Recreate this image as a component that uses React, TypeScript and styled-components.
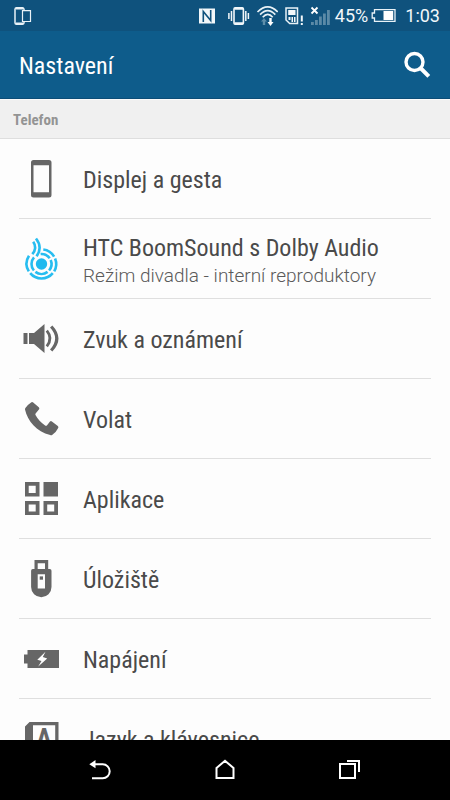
import React from "react";
import styled, { createGlobalStyle } from "styled-components";

const GlobalStyle = createGlobalStyle`
  *, *::before, *::after { box-sizing: border-box; }
  body {
    margin: 0;
    background: #fdfdfd;
    font-family: "Roboto Condensed", Roboto, sans-serif;
    color: #4a4a4a;
  }
  svg { display: block; flex: none; }
`;

const Screen = styled.div`
  display: flex;
  flex-direction: column;
  height: 100vh;
`;

const StatusBar = styled.div`
  display: flex;
  align-items: center;
  justify-content: space-between;
  flex: none;
  height: 31px;
  padding: 0 10px 0 13px;
  background: #0f527d;
  color: #f2f7fa;
  font-family: Roboto, sans-serif;
  font-size: 18px;
  line-height: 24px;
`;

const StatusGroup = styled.div`
  display: flex;
  align-items: center;
  gap: 6px;
`;

const BatteryStatus = styled.span`
  display: flex;
  align-items: center;
  gap: 3px;
  padding-right: 3px;
`;

const SignalStatus = styled.span`
  display: flex;
  align-items: center;
  gap: 4px;
`;

const NfcStatus = styled.span`
  padding-right: 6px;
`;

const AppBar = styled.header`
  display: flex;
  align-items: center;
  justify-content: space-between;
  flex: none;
  height: 68px;
  padding: 0 19px;
  border-bottom: 1px solid #0c4d77;
  background: #0e5c8b;
  color: #ffffff;
`;

const Title = styled.h1`
  margin: 0;
  padding-top: 2px;
  font-size: 24px;
  font-weight: 400;
  line-height: 32px;
`;

const IconButton = styled.button`
  display: grid;
  place-items: center;
  padding: 0;
  border: 0;
  background: none;
  color: #ffffff;
  cursor: pointer;
`;

const SectionTitle = styled.h2`
  flex: none;
  height: 40px;
  margin: 0;
  padding: 0 13px;
  border-top: 1px solid #fafafa;
  border-bottom: 1px solid #dedede;
  background: #f0f0f0;
  color: #949494;
  font-size: 15px;
  font-weight: 700;
  line-height: 41px;
`;

const List = styled.ul`
  flex: 1;
  min-height: 0;
  margin: 0;
  padding: 0 19px;
  overflow-y: auto;
  scrollbar-width: none;
  list-style: none;
`;

const Item = styled.li`
  border-bottom: 1px solid #dfdfdf;
`;

const ItemButton = styled.button`
  display: flex;
  align-items: center;
  gap: 19px;
  width: 100%;
  height: 79px;
  padding: 0;
  border: 0;
  background: none;
  color: inherit;
  font: inherit;
  text-align: left;
  cursor: pointer;
`;

const ItemText = styled.span`
  display: flex;
  flex-direction: column;
  min-width: 0;
  padding-top: 2px;
`;

const ItemLabel = styled.span`
  font-size: 24px;
  line-height: 32px;
  white-space: nowrap;
`;

const ItemDetail = styled.span`
  color: #5a5a5a;
  font-family: Roboto, sans-serif;
  font-size: 19px;
  font-weight: 300;
  line-height: 24px;
  white-space: nowrap;
`;

const NavBar = styled.nav`
  display: grid;
  grid-template-columns: repeat(3, 1fr);
  flex: none;
  height: 60px;
  padding: 0 38px;
  background: #000000;
`;

const GREY = "#666666";

const RowIcon = ({ children }: { children: React.ReactNode }) => (
  <svg width="45" height="45" viewBox="0 0 45 45" fill={GREY} aria-hidden="true">
    {children}
  </svg>
);

const DisplayIcon = () => (
  <RowIcon>
    <path
      fillRule="evenodd"
      d="M14.500 4h15.500a2.500 2.500 0 0 1 2.500 2.500v32.500a2.500 2.500 0 0 1-2.500 2.500h-15.500a2.500 2.500 0 0 1-2.500-2.500V6.500A2.500 2.500 0 0 1 14.500 4zM14.500 9.300v27h15.500v-27z"
    />
  </RowIcon>
);

const BoomSoundIcon = () => (
  <RowIcon>
    <circle cx="22.500" cy="28" r="5.700" fill="#1fb9ee" />
    <g fill="none" stroke="#27bdf0" strokeWidth="2.600">
      <path d="M15 21.400A10 10 0 0 0 14.900 34.500" />
      <path d="M16.400 35.900A10 10 0 0 0 28.600 35.900" />
      <path d="M30.100 34.500A10 10 0 0 0 31.700 24.100" />
      <path d="M30.700 22.300A10 10 0 0 0 21.600 18" />
      <path d="M10 19.700A14.700 14.700 0 0 0 9.800 35.400" />
      <path d="M11.200 37.200A14.700 14.700 0 0 0 33.800 37.200" />
      <path d="M35.200 35.400A14.700 14.700 0 0 0 36.100 22.500" />
      <path d="M35.100 20.600A14.700 14.700 0 0 0 24.300 13.500" />
      <path d="M14.200 5.700Q18.600 11.800 13.300 18.200" />
      <path d="M17 2.500Q24 11.500 17.500 20.300" />
    </g>
  </RowIcon>
);

const SoundIcon = () => (
  <RowIcon>
    <path d="M4.500 17h4v11h-4zM10 17h5L25.500 8v29L15 28h-5z" />
    <g fill="none" stroke={GREY}>
      <path strokeWidth="2.800" d="M27.800 14.700q6.400 7.800 0 15.600" />
      <path strokeWidth="3.200" d="M32.200 10.500Q43.400 22.500 32.200 34.500" />
    </g>
  </RowIcon>
);

const CallIcon = () => (
  <RowIcon>
    <path d="M12.400 6.300q1-.6 1.800.200l5.600 4.700q1 .9.300 2l-3.500 4.300q-.5.8-.1 1.600Q20 25.600 26.400 29.700q.8.400 1.500-.2l3.100-4q.9-.8 1.900-.1l5.900 4.700q1 .8.400 1.900-2.400 4.900-6.100 7-.9.500-1.900.1C17.500 35.500 8.500 25 6 13.500q-.1-.9.400-1.500 2.700-3.600 6-5.700z" />
  </RowIcon>
);

const AppsIcon = () => (
  <RowIcon>
    <path
      fillRule="evenodd"
      d="M6 6h14.500v14.500H6zM9.700 9.700v7.300h7v-7.300zM24.500 6H39v14.500H24.500zM6 25h14.500v14H6zM9.700 28.400v7.200h7v-7.200zM24.500 25H39v14H24.500zM28.200 28.400v7.200h7v-7.200z"
    />
  </RowIcon>
);

const StorageIcon = () => (
  <RowIcon>
    <path
      fillRule="evenodd"
      d="M15.500 4h13.700v9h1.600q1.700 0 1.700 1.700V31a10.200 10.200 0 0 1-20.400 0V14.700q0-1.700 1.700-1.700h1.700zM18.700 7.200V13h7.300V7.200zM18.700 18.300v14.200h7.300V18.300z"
    />
    <path d="M20.700 20.400h3.300v3.300h-3.300z" />
  </RowIcon>
);

const PowerIcon = () => (
  <RowIcon>
    <path d="M8.500 14H40v18H8.500v-4.500H5v-9h3.500z" />
    <path d="M26.500 15.700l-8.200 8 4.200 1.300-3.300 5.500 9-8-4.400-1.400z" fill="#ffffff" />
  </RowIcon>
);

const LanguageIcon = () => (
  <RowIcon>
    <path fillRule="evenodd" d="M10.500 6H39.500v34H6V10.500zM14 9.300V37h22.200V9.300z" />
    <text x="25" y="32" textAnchor="middle" fontFamily="Roboto Condensed, Roboto, sans-serif" fontSize="27" fontWeight="700">
      A
    </text>
  </RowIcon>
);

const LinkedDevicesIcon = () => (
  <svg width="19" height="20" viewBox="0 0 19 20" fill="none" stroke="#e9f2f7" aria-hidden="true">
    <path strokeWidth="1.500" d="M11 4.500V3.200A1.700 1.700 0 0 0 9.300 1.800H3.500A1.500 1.500 0 0 0 2 3.200v13.600a1.500 1.500 0 0 0 1.500 1.500h5.800a1.700 1.700 0 0 0 1.700-1.500V15.500" />
    <path strokeWidth="2" d="M3 2.500h7M3 17.500h7" />
    <path strokeWidth="1.200" d="M9.500 4.700h8v10.800h-8z" />
  </svg>
);

const NfcIcon = () => (
  <svg width="18" height="18" viewBox="0 0 18 18" aria-hidden="true">
    <path d="M1 1.500h16v15H1z" fill="#f2f7fa" />
    <path d="M5.300 15V4.500l7.400 9V3" fill="none" stroke="#0f527d" strokeWidth="1.600" />
  </svg>
);

const VibrateIcon = () => (
  <svg width="22" height="20" viewBox="0 0 22 20" fill="none" stroke="#f2f7fa" aria-hidden="true">
    <rect x="6" y="1.800" width="9.400" height="16.400" rx="1.300" strokeWidth="1.600" />
    <path strokeWidth="2.200" d="M6.500 2.600h8.500M6.500 17.400h8.500" />
    <path strokeWidth="1.500" d="M3.500 5v10M.900 7v6M17.800 5v10M20.400 7v6" />
  </svg>
);

const WifiIcon = () => (
  <svg width="22" height="22" viewBox="0 0 22 22" fill="none" stroke="#e9f2f7" aria-hidden="true">
    <g strokeWidth="1.700">
      <path d="M1.500 7Q11.800-3.200 21.700 7" />
      <path d="M4.100 9.700Q11.700 1.700 19.300 9.700" />
      <path d="M6.700 12.200Q11.700 6.600 16.700 12.200" />
    </g>
    <path d="M8 13l3 3.500H9.200V20H6.800v-3.500H5z" fill="#5e8eaa" stroke="none" />
    <path d="M13.300 13h2.400v4h1.800l-3 4-3-4h1.800z" fill="#ffffff" stroke="none" />
  </svg>
);

const SimAlertIcon = () => (
  <svg width="20" height="20" viewBox="0 0 20 20" aria-hidden="true">
    <path d="M2 2h11.500v15.500H5.700L2 14z" fill="none" stroke="#e9f2f7" strokeWidth="1.500" />
    <path d="M4.200 4h7.300v5H4.200zM4.500 11h2v3h-2zM7.500 11H9v5H7.500zM10 11h1.500v5H10zM16.800 9.500h2v6h-2zM16.800 17h2v2h-2z" fill="#f2f7fa" />
  </svg>
);

const SignalIcon = () => (
  <svg width="21" height="20" viewBox="0 0 21 20" aria-hidden="true">
    <path d="M1 16h2.800v3H1zM5 14h2.800v5H5zM9 10.500h2.800V19H9zM13 7.500h2.800V19H13zM17 4h2.800v15H17z" fill="#5b8aa7" />
    <path d="M1.500 1.500l6 6M7.500 1.500l-6 6" stroke="#ffffff" strokeWidth="1.800" />
  </svg>
);

const BatteryIcon = () => (
  <svg width="25" height="15" viewBox="0 0 25 15" aria-hidden="true">
    <path d="M3.500 1.700H24v11.600H3.500V10H1.200V5h2.300z" fill="none" stroke="#e9f2f7" strokeWidth="1.300" />
    <path d="M12.500 3h9.700v9h-9.700z" fill="#ffffff" />
  </svg>
);

const SearchIcon = () => (
  <svg width="28" height="28" viewBox="0 0 28 28" fill="none" stroke="currentColor" aria-hidden="true">
    <circle cx="11.500" cy="11" r="8.500" strokeWidth="3.400" />
    <path d="M17.500 17l8.300 8.300" strokeWidth="4" />
  </svg>
);

const BackIcon = () => (
  <svg width="24" height="24" viewBox="0 0 24 24" aria-hidden="true">
    <path d="M4 6.300h10.700a7 7 0 0 1 0 14H4" fill="none" stroke="currentColor" strokeWidth="2" />
    <path d="M1.300 6.300L7.500 2v8.300z" fill="currentColor" />
  </svg>
);

const HomeIcon = () => (
  <svg width="24" height="24" viewBox="0 0 24 24" fill="none" stroke="currentColor" strokeWidth="2" aria-hidden="true">
    <path d="M3.500 10L12 2.800l8.500 7.200v10H3.500z" />
  </svg>
);

const RecentsIcon = () => (
  <svg width="24" height="24" viewBox="0 0 24 24" fill="none" stroke="currentColor" strokeWidth="2" aria-hidden="true">
    <path d="M2 6h15v14H2z" />
    <path d="M9 3h12v11" />
  </svg>
);

interface Setting {
  label: string;
  detail?: string;
  icon: React.ReactNode;
}

const settings: Setting[] = [
  { label: "Displej a gesta", icon: <DisplayIcon /> },
  {
    label: "HTC BoomSound s Dolby Audio",
    detail: "Režim divadla - interní reproduktory",
    icon: <BoomSoundIcon />,
  },
  { label: "Zvuk a oznámení", icon: <SoundIcon /> },
  { label: "Volat", icon: <CallIcon /> },
  { label: "Aplikace", icon: <AppsIcon /> },
  { label: "Úložiště", icon: <StorageIcon /> },
  { label: "Napájení", icon: <PowerIcon /> },
  { label: "Jazyk a klávesnice", icon: <LanguageIcon /> },
];

export default function App() {
  return (
    <>
      <GlobalStyle />
      <Screen>
        <StatusBar>
          <LinkedDevicesIcon />
          <StatusGroup>
            <NfcStatus>
              <NfcIcon />
            </NfcStatus>
            <VibrateIcon />
            <WifiIcon />
            <SimAlertIcon />
            <SignalStatus>
              <SignalIcon />
              <BatteryStatus>
                45%
                <BatteryIcon />
              </BatteryStatus>
            </SignalStatus>
            <time>1:03</time>
          </StatusGroup>
        </StatusBar>
        <AppBar>
          <Title>Nastavení</Title>
          <IconButton aria-label="Hledat">
            <SearchIcon />
          </IconButton>
        </AppBar>
        <SectionTitle>Telefon</SectionTitle>
        <List>
          {settings.map(({ label, detail, icon }) => (
            <Item key={label}>
              <ItemButton>
                {icon}
                <ItemText>
                  <ItemLabel>{label}</ItemLabel>
                  {detail && <ItemDetail>{detail}</ItemDetail>}
                </ItemText>
              </ItemButton>
            </Item>
          ))}
        </List>
        <NavBar>
          <IconButton aria-label="Zpět">
            <BackIcon />
          </IconButton>
          <IconButton aria-label="Domů">
            <HomeIcon />
          </IconButton>
          <IconButton aria-label="Poslední aplikace">
            <RecentsIcon />
          </IconButton>
        </NavBar>
      </Screen>
    </>
  );
}
